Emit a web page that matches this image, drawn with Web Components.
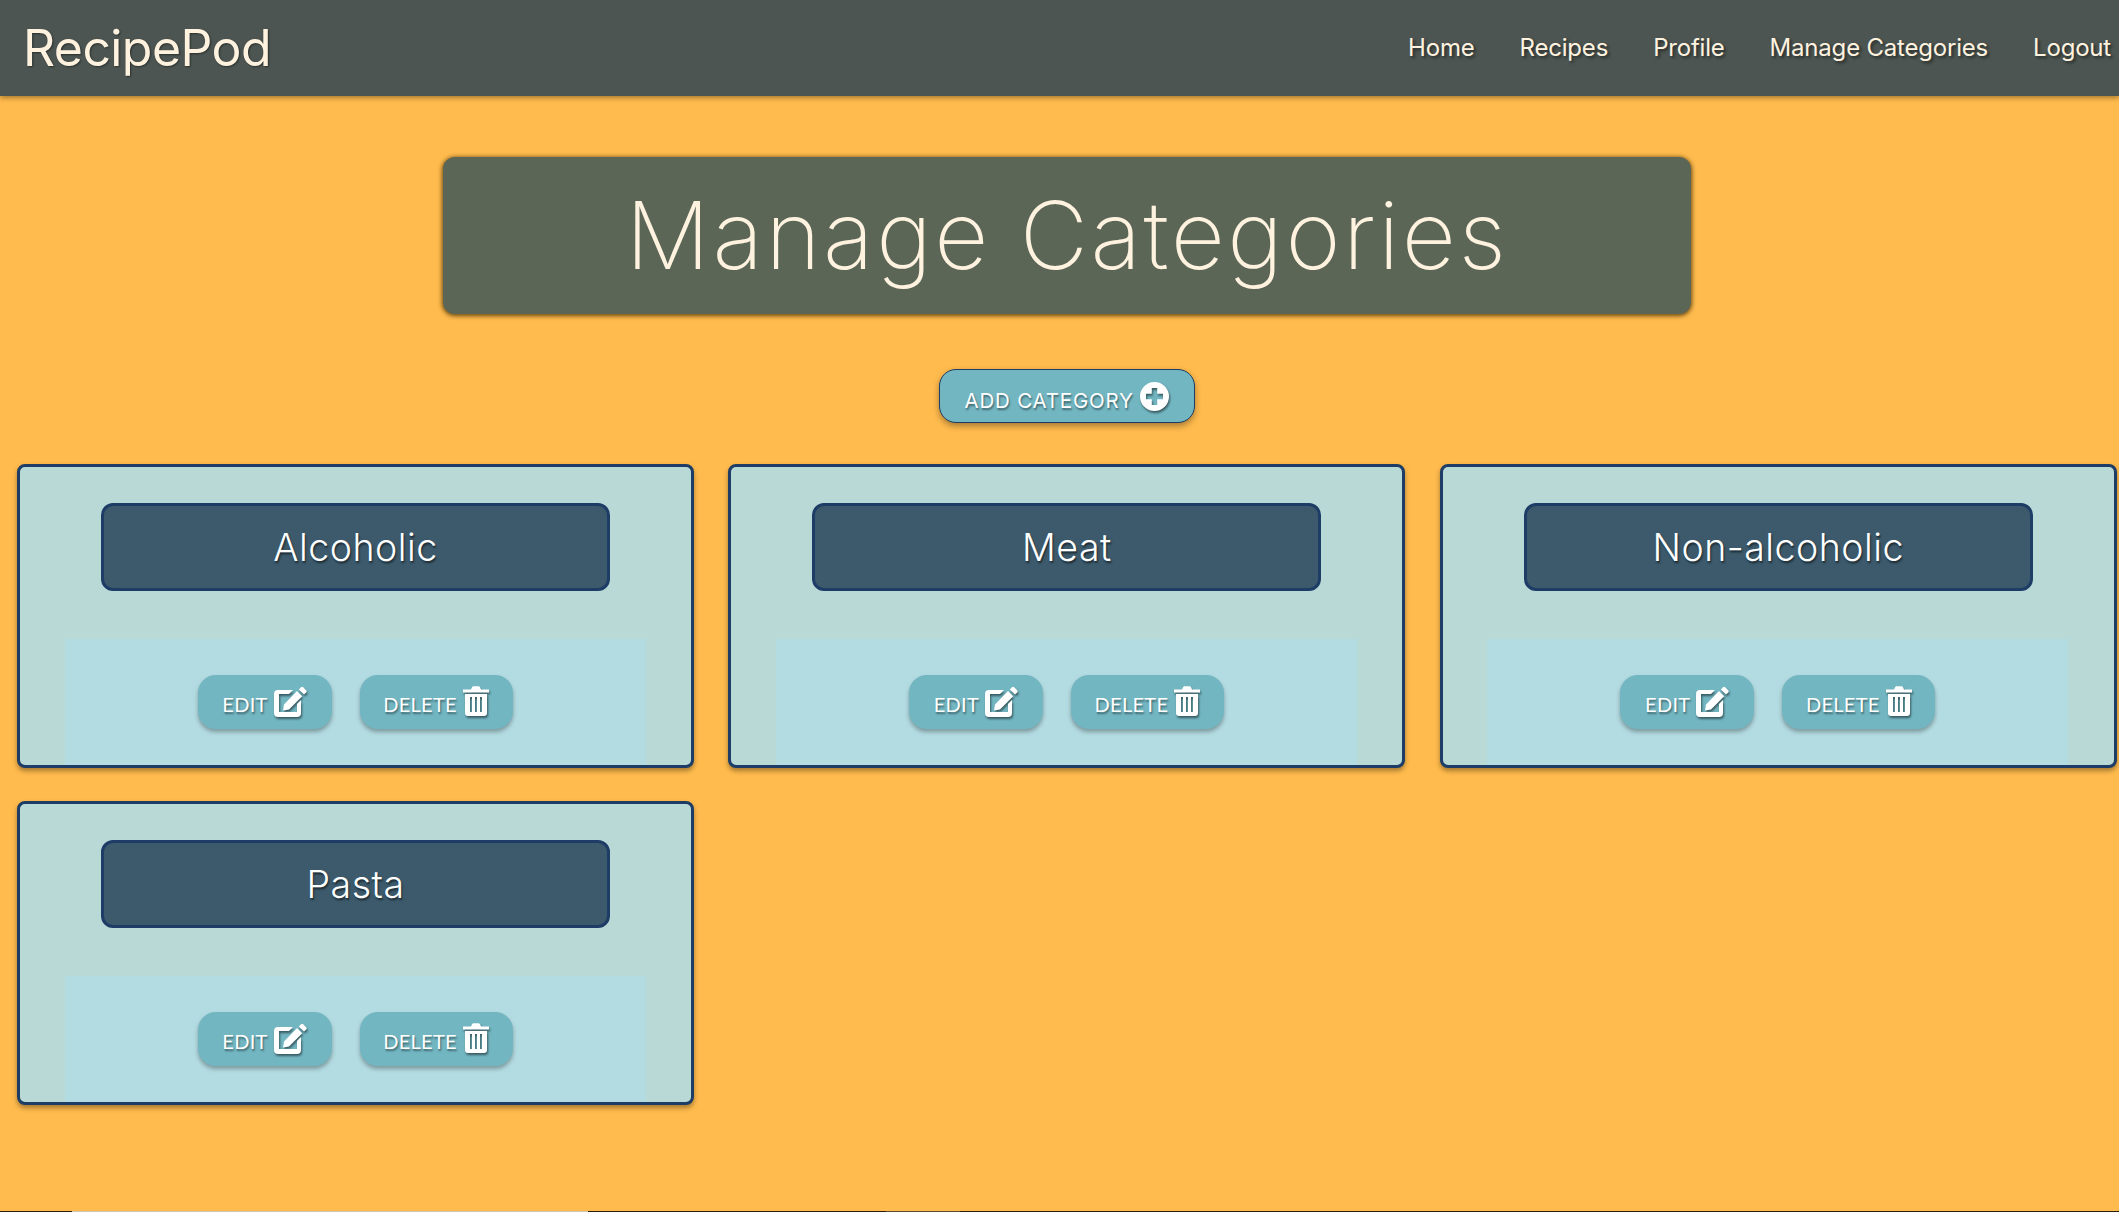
<!DOCTYPE html>
<html lang="en"><head><meta charset="utf-8"><title>RecipePod</title>
<style>
html,body{margin:0;padding:0;height:100%;overflow:hidden;background:#ffbb4d}
body{font-family:"Inter","Liberation Sans",sans-serif;color:#fff3e0;height:1212px;position:relative}
</style></head><body>
<rp-nav></rp-nav>
<rp-main>
  <rp-title>Manage Categories</rp-title>
  <rp-add>ADD CATEGORY</rp-add>
  <rp-grid>
    <rp-card name="Alcoholic"></rp-card>
    <rp-card name="Meat"></rp-card>
    <rp-card name="Non-alcoholic"></rp-card>
    <rp-card name="Pasta"></rp-card>
  </rp-grid>
</rp-main>
<rp-strip></rp-strip>
<script>
const def=(name,html)=>customElements.define(name,class extends HTMLElement{
  connectedCallback(){ if(this.shadowRoot) return; this.attachShadow({mode:'open'}).innerHTML=typeof html==='function'?html(this):html; }
});
const EDIT=`<svg viewBox="0 0 33 31" width="33" height="31" fill="#fff"><path fill-rule="evenodd" d="M4 4h15l-4 4H5v18h18v-8l4-4v13a4 4 0 0 1-4 4H4a4 4 0 0 1-4-4V8a4 4 0 0 1 4-4z"/><path d="M27 1.2a1.6 1.6 0 0 1 2.2 0l3 3a1.6 1.6 0 0 1 0 2.2l-2.2 2.2-5.2-5.2zM23 5l5.2 5.2L15 23.4 9 24.5l1-6z"/></svg>`;
const TRASH=`<svg viewBox="0 0 26 30" width="26" height="30" fill="#fff"><path fill-rule="evenodd" d="M2 8h22v19a3 3 0 0 1-3 3H5a3 3 0 0 1-3-3zM7 11v15h2V11zM12 11v15h2V11zM17 11v15h2V11z"/><path d="M0 3.500h8L9 1.200Q9.500.3 10.500.3h5q1 0 1.500.9l1 2.300h8V6.500H0z"/></svg>`;
const PLUS=`<svg viewBox="0 0 29 29" width="29" height="29"><path fill="#fff" fill-rule="evenodd" d="M14.500 0a14.500 14.500 0 1 1 0 29a14.500 14.500 0 0 1 0-29zM11.800 6v5.800H6v5.400h5.800V23h5.400v-5.800H23v-5.400h-5.800V6z"/></svg>`;

def('rp-nav',`<style>
:host{display:flex;align-items:center;justify-content:space-between;height:96px;background:#4c5551;box-shadow:0 2px 5px rgba(0,0,0,.35);padding:0 8px 0 23px;box-sizing:border-box;width:2119px;position:relative}
.b{font:400 50px/1 "Inter","Lato",sans-serif;letter-spacing:-.6px;color:#fff3e0;text-shadow:1px 1px 2px rgba(0,0,0,.45)}
nav{display:flex;gap:45px}
a{font:400 24px/1 "Inter",sans-serif;letter-spacing:-.2px;color:#fff3e0;text-shadow:2px 2px 3px rgba(0,0,0,.5)}
</style><div class="b">RecipePod</div><nav><a>Home</a><a>Recipes</a><a>Profile</a><a>Manage Categories</a><a>Logout</a></nav>`);

def('rp-main',`<style>:host{display:flex;flex-direction:column;align-items:center;width:2133px}</style><slot></slot>`);

def('rp-title',`<style>
:host{display:block;box-sizing:border-box;width:1248px;height:157px;margin:61px 0 0 1px;background:#5b6657;border-radius:12px;box-shadow:0 1px 4px 1px rgba(60,40,0,.75);text-align:center;font:200 94px/157px "Inter",sans-serif;letter-spacing:2.500px;color:#fff3e0}
</style><slot></slot>`);

def('rp-add',`<style>
:host{display:flex;align-items:center;gap:6px;box-sizing:border-box;width:256px;height:54px;margin-top:55px;padding-left:25px;background:#72b6c2;border:1px solid #1d3d66;border-radius:17px;box-shadow:0 3px 6px rgba(0,0,0,.35);font:400 20.500px/1 "Inter",sans-serif;letter-spacing:.8px;color:#fff;text-shadow:1px 2px 2px rgba(0,0,0,.45)}
svg{filter:drop-shadow(1px 2px 1px rgba(0,0,0,.5))}
span{position:relative;top:5px}
</style><span><slot></slot></span>${PLUS}`);

def('rp-grid',`<style>:host{display:grid;grid-template-columns:repeat(3,677px);gap:33px 34.400px;margin-top:41px;align-self:flex-start;margin-left:17px}</style><slot></slot>`);

def('rp-btn',`<style>
:host{display:inline-flex;align-items:center;justify-content:center;gap:6px;box-sizing:border-box;height:54px;background:#72b6c2;border-radius:18px;box-shadow:0 3px 4px rgba(0,0,0,.3);font:400 20px/1 "Lato",sans-serif;letter-spacing:.3px;color:#fff;text-shadow:1px 2px 2px rgba(0,0,0,.45)}
::slotted(svg){filter:drop-shadow(1px 2px 1px rgba(0,0,0,.5));position:relative;top:-1px}
span{position:relative;top:2px}
</style><span><slot></slot></span><slot name="i"></slot>`);

def('rp-card',h=>`<style>
:host{display:flex;flex-direction:column;align-items:center;box-sizing:border-box;height:304px;background:#b9d9d6;border:3px solid #1d3d66;border-radius:8px;box-shadow:0 3px 5px rgba(0,0,0,.35);overflow:clip}
.t{box-sizing:border-box;width:509px;height:88px;margin-top:36px;padding-top:2px;background:#3c5a6c;border:3px solid #1d3d66;border-radius:12px;display:flex;align-items:center;justify-content:center;font:300 37.500px/1 "Inter",sans-serif;letter-spacing:.5px;color:#fff;text-shadow:1px 2px 2px rgba(0,0,0,.55)}
.p{flex:1;box-sizing:border-box;width:581px;margin:48px 1px 0 0;background:#b3dce2;display:flex;justify-content:center;gap:28px;padding-top:36px}
</style><div class="t">${h.getAttribute('name')}</div><div class="p"><rp-btn style="width:134px">EDIT${EDIT.replace('<svg','<svg slot="i"')}</rp-btn><rp-btn style="width:153px">DELETE${TRASH.replace('<svg','<svg slot="i"')}</rp-btn></div>`);

def('rp-strip',`<style>:host{position:absolute;left:0;right:0;bottom:0;height:1px;display:flex;background:#2a1e0c}
i{display:block;height:1px}</style><i style="width:72px"></i><i style="width:516px;background:#cfc6ae"></i><i style="width:298px"></i><i style="width:74px;background:#5a4a30"></i>`);
</script>
</body></html>
